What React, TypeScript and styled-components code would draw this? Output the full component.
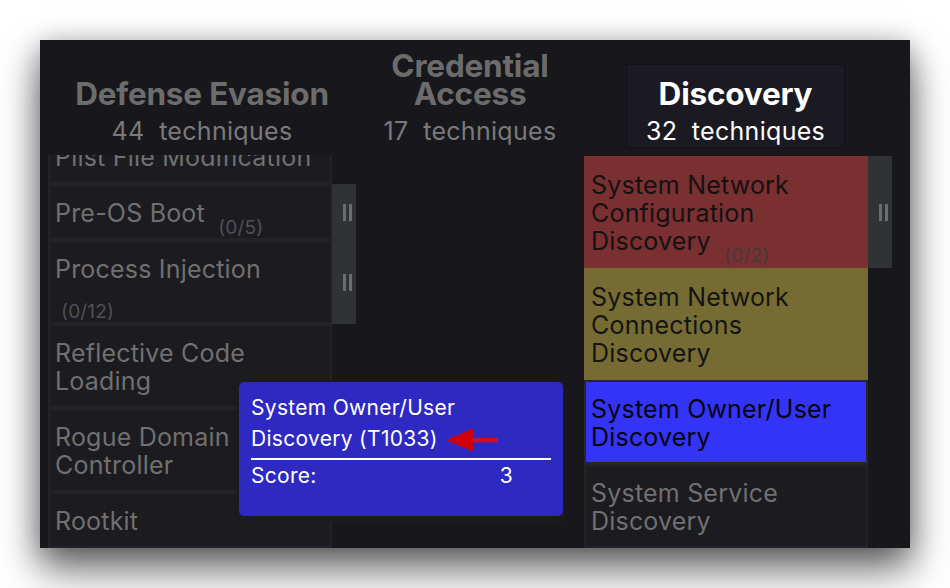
import React from "react";
import styled, { createGlobalStyle } from "styled-components";

type Tone = "plain" | "red" | "olive" | "blue";

type Technique = {
  name: string;
  count?: string;
  tone?: Tone;
  tab?: boolean;
};

type TacticData = {
  name: string;
  total: number;
  active?: boolean;
  scroll: number;
  techniques: Technique[];
};

const tones: Record<Tone, { bg: string; border: string; text: string; count: string }> = {
  plain: { bg: "#1c1b20", border: "#232228", text: "#707070", count: "#515054" },
  red: { bg: "#7a2f31", border: "#7a2f31", text: "#141213", count: "#443b3c" },
  olive: { bg: "#766c33", border: "#766c33", text: "#141413", count: "#4a452c" },
  blue: { bg: "#3434f6", border: "#27262c", text: "#050510", count: "#20208a" },
};

const tactics: TacticData[] = [
  {
    name: "Defense Evasion",
    total: 44,
    scroll: 27,
    techniques: [
      { name: "Plist File Modification" },
      { name: "Pre-OS Boot", count: "(0/5)", tab: true },
      { name: "Process Injection", count: "(0/12)", tab: true },
      { name: "Reflective Code Loading" },
      { name: "Rogue Domain Controller" },
      { name: "Rootkit" },
    ],
  },
  { name: "Credential Access", total: 17, scroll: 0, techniques: [] },
  {
    name: "Discovery",
    total: 32,
    active: true,
    scroll: 0,
    techniques: [
      { name: "System Network Configuration Discovery", count: "(0/2)", tone: "red", tab: true },
      { name: "System Network Connections Discovery", tone: "olive" },
      { name: "System Owner/User Discovery", tone: "blue" },
      { name: "System Service Discovery" },
    ],
  },
];

const GlobalStyle = createGlobalStyle`
  html, body {
    margin: 0;
    padding: 0;
    background: #ffffff;
  }
  body {
    font-family: Inter, "Noto Sans", "Liberation Sans", sans-serif;
    -webkit-font-smoothing: antialiased;
  }
`;

const Page = styled.div`
  width: 950px;
  height: 588px;
  padding: 40px;
  box-sizing: border-box;
  background: #ffffff;
`;

const Window = styled.div`
  position: relative;
  width: 870px;
  height: 508px;
  background: #18171c;
  overflow: hidden;
  box-shadow: 0 22px 38px rgba(0, 0, 0, 0.55), 0 4px 26px rgba(0, 0, 0, 0.3);
`;

const Matrix = styled.div`
  display: flex;
  height: 100%;
  padding-left: 8px;
`;

const TacticColumn = styled.div`
  flex: 0 0 308px;
  margin-right: -40px;
  display: flex;
  flex-direction: column;
  min-height: 0;
`;

const HeaderSlot = styled.div`
  flex: 0 0 124px;
  margin-top: -16px;
  display: flex;
  justify-content: center;
  align-items: flex-end;
`;

const TacticHeader = styled.div<{ $active?: boolean }>`
  max-width: 308px;
  box-sizing: border-box;
  padding: 15px 19px 2px;
  margin-right: ${(p) => (p.$active ? "5px" : "0")};
  border: 1px solid ${(p) => (p.$active ? "#121116" : "transparent")};
  background: ${(p) => (p.$active ? "#1b1a22" : "transparent")};
  text-align: center;
`;

const TacticName = styled.div<{ $active?: boolean }>`
  font-size: 31.5px;
  font-weight: 700;
  line-height: 28px;
  letter-spacing: -0.2px;
  color: ${(p) => (p.$active ? "#ffffff" : "#6c6c6c")};
`;

const TacticTotal = styled.div<{ $active?: boolean }>`
  margin-top: 9px;
  font-size: 25px;
  line-height: 28px;
  letter-spacing: 0.3px;
  white-space: pre;
  color: ${(p) => (p.$active ? "#ffffff" : "#7a7a7a")};
`;

const TechList = styled.div<{ $offset: number }>`
  flex: 1;
  min-height: 0;
  margin-top: ${(p) => p.$offset}px;
  overflow: hidden;
`;

const TechStack = styled.div<{ $scroll: number }>`
  display: flex;
  flex-direction: column;
  margin-top: ${(p) => -p.$scroll}px;
`;

const TechRow = styled.div`
  display: flex;
  align-items: stretch;
`;

const TechCell = styled.div<{ $tone: Tone }>`
  flex: 0 0 284px;
  box-sizing: border-box;
  padding: 13px 8px 11px 5px;
  border: 2px solid ${(p) => tones[p.$tone].border};
  background: ${(p) => tones[p.$tone].bg};
  color: ${(p) => tones[p.$tone].text};
  font-size: 25px;
  line-height: 28px;
  letter-spacing: 0.2px;
`;

const Count = styled.span<{ $tone: Tone }>`
  position: relative;
  top: 12px;
  margin-left: 6px;
  font-size: 19px;
  line-height: 0;
  white-space: nowrap;
  color: ${(p) => tones[p.$tone].count};
`;

const SubTab = styled.div<{ $visible: boolean }>`
  flex: 0 0 24px;
  box-sizing: border-box;
  padding-left: 6px;
  display: flex;
  align-items: center;
  justify-content: center;
  gap: 3px;
  background: ${(p) => (p.$visible ? "#303336" : "transparent")};
`;

const HandleBar = styled.span`
  width: 3px;
  height: 17px;
  background: #6b6e70;
`;

const TooltipFrame = styled.div`
  position: absolute;
  left: 196px;
  top: 341px;
  width: 328px;
  box-sizing: border-box;
  padding: 1px 1px 6px 3px;
  background: rgba(27, 26, 31, 0.95);
`;

const TooltipBody = styled.div`
  border-radius: 5px;
  padding: 10px 12px 25px 12px;
  background: rgba(47, 42, 200, 0.96);
  color: #ffffff;
  font-size: 21px;
  line-height: 31px;
  letter-spacing: 0.3px;
`;

const TooltipTitle = styled.div``;

const Arrow = styled.svg`
  margin-left: 8px;
  vertical-align: middle;
`;

const Divider = styled.div`
  height: 2px;
  margin: 4px 0 0;
  background: #ffffff;
`;

const ScoreRow = styled.div`
  display: flex;
  justify-content: space-between;
  padding-right: 38px;
`;

function Handle() {
  return (
    <>
      <HandleBar />
      <HandleBar />
    </>
  );
}

function TechniqueRow({ tech }: { tech: Technique }) {
  const tone = tech.tone ?? "plain";
  return (
    <TechRow>
      <TechCell $tone={tone}>
        {tech.name}
        {tech.count ? " " : null}
        {tech.count ? <Count $tone={tone}>{tech.count}</Count> : null}
      </TechCell>
      <SubTab $visible={!!tech.tab}>{tech.tab ? <Handle /> : null}</SubTab>
    </TechRow>
  );
}

export default function App() {
  return (
    <>
      <GlobalStyle />
      <Page>
        <Window>
          <Matrix>
            {tactics.map((t) => (
              <TacticColumn key={t.name}>
                <HeaderSlot>
                  <TacticHeader $active={t.active}>
                    <TacticName $active={t.active}>{t.name}</TacticName>
                    <TacticTotal $active={t.active}>{`${t.total}  techniques`}</TacticTotal>
                  </TacticHeader>
                </HeaderSlot>
                <TechList $offset={t.active ? 8 : 7}>
                  <TechStack $scroll={t.scroll}>
                    {t.techniques.map((tech) => (
                      <TechniqueRow key={tech.name} tech={tech} />
                    ))}
                  </TechStack>
                </TechList>
              </TacticColumn>
            ))}
          </Matrix>
          <TooltipFrame>
            <TooltipBody>
              <TooltipTitle>
                System Owner/User Discovery (T1033)
                <Arrow width="52" height="24" viewBox="0 0 52 24">
                  <rect x="26" y="10" width="26" height="4.4" fill="#c8102e" />
                  <polygon points="0,12 27,0.5 27,23.5" fill="#d0000f" />
                </Arrow>
              </TooltipTitle>
              <Divider />
              <ScoreRow>
                <span>Score:</span>
                <span>3</span>
              </ScoreRow>
            </TooltipBody>
          </TooltipFrame>
        </Window>
      </Page>
    </>
  );
}
